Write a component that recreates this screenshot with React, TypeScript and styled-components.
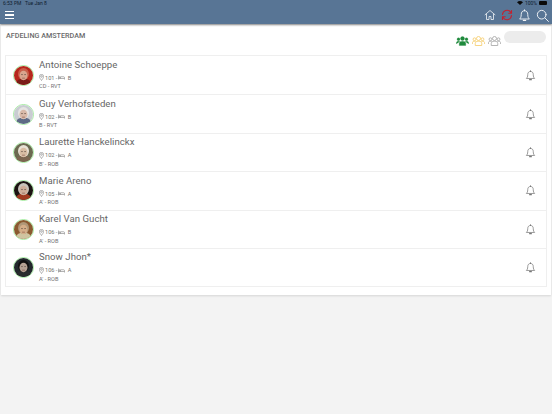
import React from "react";
import styled, { createGlobalStyle } from "styled-components";

const Global = createGlobalStyle`
  html, body { margin: 0; padding: 0; background: #f3f3f3; }
  body { font-family: Roboto, "Liberation Sans", sans-serif; width: 552px; height: 414px; overflow: hidden; }
`;
const Page = styled.div`width: 552px; height: 414px; display: flex; flex-direction: column;`;
const Header = styled.header`
  height: 24px; background: #587595; box-shadow: 0 1px 2px rgba(0,0,0,.45);
  display: flex; flex-direction: column; flex: none; position: relative; z-index: 1;
`;
const StatusBar = styled.div`
  height: 6px; padding: 0 3px; display: flex; justify-content: space-between; align-items: center;
  color: #10202f; font-size: 5px; line-height: 6px; white-space: pre;
`;
const StatusRight = styled.div`display: flex; align-items: center; gap: 2px; padding-right: 2px;`;
const Battery = styled.span`width: 8px; height: 3.5px; background: #0a0a0a; border-radius: 1px; display: block;`;
const NavBar = styled.div`
  flex: 1; display: flex; justify-content: space-between; align-items: center; padding: 0 3px 0 5px;
`;
const Burger = styled.div`
  width: 9px; height: 8px; display: flex; flex-direction: column; justify-content: space-between;
  span { display: block; height: 1.3px; background: #fff; }
`;
const NavIcons = styled.div`display: flex; align-items: center; gap: 5px;`;
const Panel = styled.main`
  margin: 1px 1px 0; height: 270px; background: #fff; padding: 0 4px;
  box-shadow: 0 1px 2px rgba(0,0,0,.12); box-sizing: border-box; display: flex; flex-direction: column; flex: none;
`;
const TopRow = styled.div`height: 30px; display: flex; justify-content: space-between; flex: none;`;
const Title = styled.h1`
  margin: 0; padding: 6px 0 0 1px; font-size: 7.2px; line-height: 9px; font-weight: 500; color: #6a6a6a;
`;
const Filters = styled.div`display: flex; align-items: flex-start; padding-right: 1px;`;
const FilterIcons = styled.div`display: flex; gap: 3px; padding-top: 11px; margin-right: 3px;`;
const Pill = styled.div`width: 42px; height: 12px; margin-top: 6px; background: #ececec; border-radius: 6px;`;
const List = styled.ul`margin: 0; padding: 0; list-style: none; border: 1px solid #efefef; border-bottom-width: 1px; width: 542px; box-sizing: border-box;`;
const Row = styled.li`
  height: 38.4px; box-sizing: border-box; display: flex; align-items: center; padding: 0 10px 0 7px;
  & + & { border-top: 1px solid #efefef; }
`;
const Avatar = styled.div`
  width: 21px; height: 21px; border-radius: 50%; border: 1px solid #a4eca0; box-sizing: border-box; overflow: hidden; flex: none;
  svg { display: block; width: 100%; height: 100%; }
`;
const Info = styled.div`margin-left: 5px; flex: 1; display: flex; flex-direction: column; margin-top: -1px;`;
const Name = styled.div`font-size: 9.6px; line-height: 12px; color: #666; letter-spacing: .05px;`;
const Meta = styled.div`
  display: flex; align-items: center; margin-top: 3px; height: 8px; font-size: 5.6px; color: #707070;
  svg { flex: none; }
`;
const MetaText = styled.span`margin: 0 1px;`;
const Sub = styled.div`font-size: 5.6px; line-height: 7px; margin-top: 1.5px; color: #707070;`;

const Bell = ({ size = 10, color = "#777", sw = 1.6 }: { size?: number; color?: string; sw?: number }) => (
  <svg width={size} height={size} viewBox="0 0 24 24" fill="none" stroke={color} strokeWidth={sw} strokeLinejoin="round" strokeLinecap="round">
    <path d="M12 3c-4 0-6 3-6 7 0 5-1.5 7-3 8.5h18c-1.500-1.500-3-3.500-3-8.500 0-4-2-7-6-7z" />
    <path d="M10 21h4" strokeWidth={sw + 0.8} />
    <path d="M12 1.500v1.500" />
  </svg>
);
const People = ({ color, filled }: { color: string; filled?: boolean }) => (
  <svg width="13" height="10" viewBox="0 0 26 20" fill={filled ? color : "none"} stroke={color} strokeWidth={filled ? 0.6 : 1.7}>
    <circle cx="5" cy="6.500" r="2.800" />
    <circle cx="21" cy="6.500" r="2.800" />
    <path d="M0.800 16v-2.500c0-2 1.500-3 4.200-3s3 .5 3 .5M25.200 16v-2.500c0-2-1.500-3-4.200-3s-3 .5-3 .5" />
    <circle cx="13" cy="5" r="4" />
    <path d="M6.500 19v-4c0-3 2.500-4.500 6.500-4.500s6.500 1.500 6.500 4.500v4z" />
  </svg>
);
const Pin = () => (
  <svg width="5" height="7" viewBox="0 0 10 14" fill="none" stroke="#808080" strokeWidth="1.200">
    <path d="M5 13C3 10 .8 7.500.8 5a4.200 4.200 0 0 1 8.400 0C9.200 7.500 7 10 5 13z" />
    <circle cx="5" cy="5" r="1.600" />
  </svg>
);
const BedIcon = () => (
  <svg width="7" height="5" viewBox="0 0 14 10" fill="none" stroke="#808080" strokeWidth="1.200">
    <path d="M1 1v8M1 7h12v2M13 7V5c0-1-1-1.500-2-1.500H5V7" />
    <circle cx="3" cy="4.500" r="1" />
  </svg>
);

type Face = { bg: string; skin: string; hair: string; shirt: string };
const Portrait = ({ bg, skin, hair, shirt }: Face) => (
  <svg viewBox="0 0 20 20">
    <rect width="20" height="20" fill={bg} />
    <path d="M2 20c0-5 3-6.500 8-6.500s8 1.500 8 6.500z" fill={shirt} />
    <ellipse cx="10" cy="8.500" rx="5.800" ry="6.300" fill={hair} />
    <ellipse cx="10" cy="10" rx="4.200" ry="5" fill={skin} />
    <path d="M7.500 9h1.800M10.800 9h1.800" stroke="#5b4a40" strokeWidth=".7" />
    <path d="M8.500 12.800h3" stroke="#7a4a40" strokeWidth=".6" />
  </svg>
);

const people: Array<{ name: string; room: string; bed: string; sub: string; face: Face }> = [
  { name: "Antoine Schoeppe", room: "101", bed: "B", sub: "CD - RVT", face: { bg: "#b7271c", skin: "#d9a58e", hair: "#c95f4a", shirt: "#7a1d18" } },
  { name: "Guy Verhofsteden", room: "102", bed: "B", sub: "B - RVT", face: { bg: "#c9ccd2", skin: "#d8b9a8", hair: "#e6e4e2", shirt: "#5d6a85" } },
  { name: "Laurette Hanckelinckx", room: "102", bed: "A", sub: "B' - ROB", face: { bg: "#6b6a50", skin: "#d8bda3", hair: "#e8e2d6", shirt: "#7c6650" } },
  { name: "Marie Areno", room: "105", bed: "A", sub: "A' - ROB", face: { bg: "#1c1412", skin: "#cfae9a", hair: "#c9c4bc", shirt: "#a03a20" } },
  { name: "Karel Van Gucht", room: "106", bed: "B", sub: "A' - ROB", face: { bg: "#8a5a30", skin: "#d5ae88", hair: "#b09878", shirt: "#cfc4a0" } },
  { name: "Snow Jhon*", room: "106", bed: "A", sub: "A' - ROB", face: { bg: "#22282c", skin: "#b7a294", hair: "#121010", shirt: "#2a2c2e" } },
];

export default function App() {
  return (
    <Page>
      <Global />
      <Header>
        <StatusBar>
          <span>6:53 PM   Tue Jan 8</span>
          <StatusRight>
            <svg width="6" height="4" viewBox="0 0 12 8" fill="#0a0a0a"><path d="M0 2.500C3.500-.8 8.500-.8 12 2.500L6 8z" /></svg>
            <span>100%</span>
            <Battery />
          </StatusRight>
        </StatusBar>
        <NavBar>
          <Burger><span /><span /><span /></Burger>
          <NavIcons>
            <svg width="12" height="12" viewBox="0 0 24 24" fill="none" stroke="#e8edf2" strokeWidth="1.700" strokeLinejoin="round">
              <path d="M1.500 12L12 3l10.500 9M5 10v11h5v-6h4v6h5V10" />
            </svg>
            <svg width="12" height="12" viewBox="0 0 24 24" fill="none" stroke="#c5202e" strokeWidth="2.200" strokeLinecap="round" strokeLinejoin="round">
              <path d="M3 11a9 9 0 0 1 16-5l2 2.500M21 3v5.500h-5.500M21 13a9 9 0 0 1-16 5l-2-2.500M3 21v-5.500h5.500" />
            </svg>
            <Bell size={13} color="#f2f4f7" sw={1.700} />
            <svg width="13" height="13" viewBox="0 0 24 24" fill="none" stroke="#eef1f5" strokeWidth="1.800" strokeLinecap="round">
              <circle cx="10.500" cy="10.500" r="8" /><path d="M16.500 16.500L23 23" />
            </svg>
          </NavIcons>
        </NavBar>
      </Header>
      <Panel>
        <TopRow>
          <Title>AFDELING AMSTERDAM</Title>
          <Filters>
            <FilterIcons>
              <People color="#1f8a3c" filled />
              <People color="#f6cd6e" />
              <People color="#a8a8a8" />
            </FilterIcons>
            <Pill />
          </Filters>
        </TopRow>
        <List>
          {people.map((p) => (
            <Row key={p.name}>
              <Avatar><Portrait {...p.face} /></Avatar>
              <Info>
                <Name>{p.name}</Name>
                <Meta>
                  <Pin />
                  <MetaText>{p.room} -</MetaText>
                  <BedIcon />
                  <MetaText>&nbsp;{p.bed}</MetaText>
                </Meta>
                <Sub>{p.sub}</Sub>
              </Info>
              <Bell size={11} />
            </Row>
          ))}
        </List>
      </Panel>
    </Page>
  );
}
